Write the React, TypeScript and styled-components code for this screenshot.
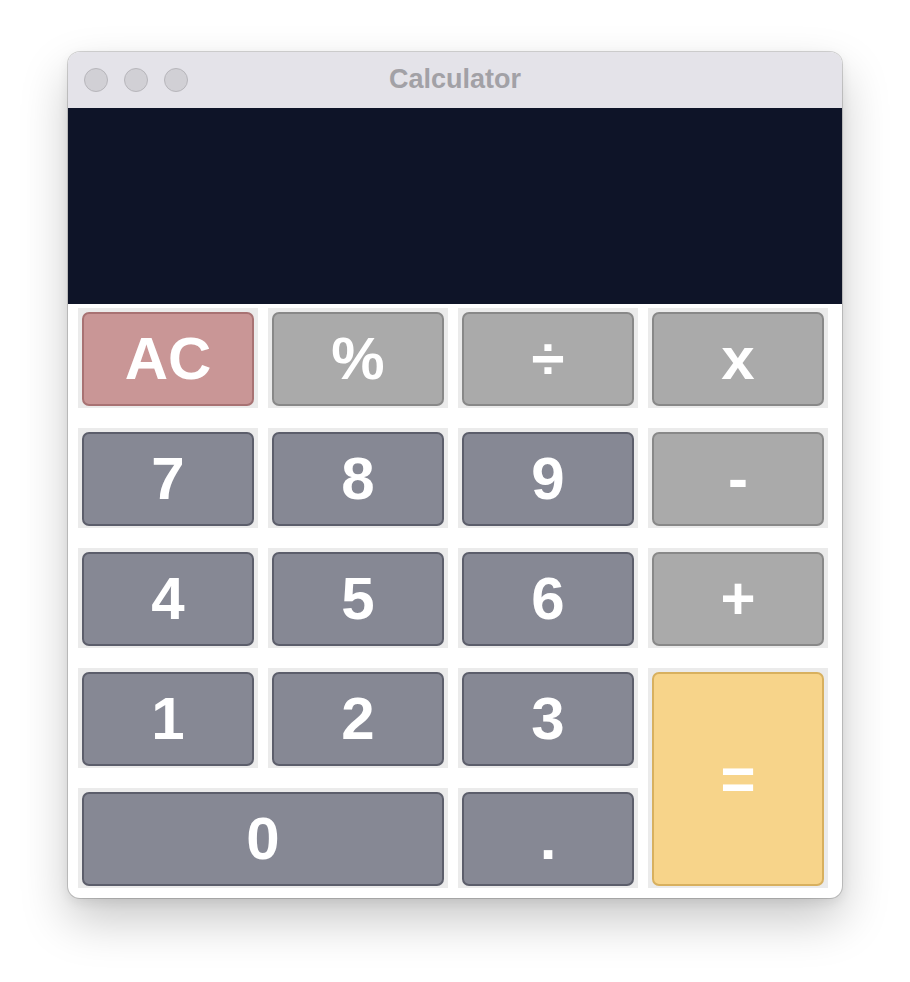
import React from "react";
import styled, { createGlobalStyle } from "styled-components";

const Global = createGlobalStyle`
  html, body { margin: 0; padding: 0; background: #ffffff; }
  body { font-family: "Liberation Sans", Arial, sans-serif; }
`;

const Page = styled.div`
  display: flex;
  justify-content: center;
  padding-top: 52px;
  height: 982px;
  box-sizing: border-box;
`;

const Window = styled.div`
  width: 774px;
  height: 846px;
  box-sizing: border-box;
  background: #ffffff;
  border-radius: 12px;
  overflow: hidden;
  box-shadow: 0 0 0 1px rgba(0, 0, 0, 0.16), 0 22px 48px rgba(0, 0, 0, 0.22),
    0 4px 12px rgba(0, 0, 0, 0.08);
  display: flex;
  flex-direction: column;
`;

const TitleBar = styled.div`
  height: 56px;
  flex: none;
  background: #e4e3e9;
  display: flex;
  align-items: center;
  position: relative;
  padding-left: 16px;
  gap: 16px;
`;

const Light = styled.span`
  width: 22px;
  height: 22px;
  border-radius: 50%;
  background: #d1d0d5;
  border: 1px solid #b7b6bb;
`;

const Title = styled.div`
  position: absolute;
  left: 0;
  right: 0;
  top: 0;
  bottom: 0;
  display: flex;
  align-items: center;
  justify-content: center;
  padding-bottom: 2px;
  font-weight: bold;
  font-size: 27px;
  color: #a2a1a6;
  pointer-events: none;
`;

const Display = styled.div`
  height: 196px;
  flex: none;
  background: #0e1428;
`;

const Keypad = styled.div`
  display: grid;
  grid-template-columns: repeat(4, 180px);
  grid-auto-rows: 100px;
  column-gap: 10px;
  row-gap: 20px;
  padding: 4px 14px 10px 10px;
`;

const Cell = styled.div<{ $wide?: boolean; $tall?: boolean }>`
  background: #ebebeb;
  padding: 4px 4px 2px 4px;
  display: flex;
  ${(p) => (p.$wide ? "grid-column: span 2;" : "")}
  ${(p) => (p.$tall ? "grid-row: span 2;" : "")}
`;

type Kind = "clear" | "op" | "num" | "eq";

const palette: Record<Kind, [string, string]> = {
  clear: ["#c99696", "#a87273"],
  op: ["#aaaaaa", "#888888"],
  num: ["#868894", "#5c5e6b"],
  eq: ["#f7d48a", "#d8b05e"],
};

const Key = styled.button<{ $kind: Kind }>`
  flex: 1;
  margin: 0;
  padding: 0;
  border-radius: 7px;
  border: 2px solid ${(p) => palette[p.$kind][1]};
  background: ${(p) => palette[p.$kind][0]};
  color: #ffffff;
  font-family: "Liberation Sans", Arial, sans-serif;
  font-weight: bold;
  font-size: 60px;
  line-height: 1;
  display: flex;
  align-items: center;
  justify-content: center;
  cursor: pointer;
`;

const keys: { label: string; kind: Kind; wide?: boolean; tall?: boolean }[] = [
  { label: "AC", kind: "clear" },
  { label: "%", kind: "op" },
  { label: "÷", kind: "op" },
  { label: "x", kind: "op" },
  { label: "7", kind: "num" },
  { label: "8", kind: "num" },
  { label: "9", kind: "num" },
  { label: "-", kind: "op" },
  { label: "4", kind: "num" },
  { label: "5", kind: "num" },
  { label: "6", kind: "num" },
  { label: "+", kind: "op" },
  { label: "1", kind: "num" },
  { label: "2", kind: "num" },
  { label: "3", kind: "num" },
  { label: "=", kind: "eq", tall: true },
  { label: "0", kind: "num", wide: true },
  { label: ".", kind: "num" },
];

export default function App() {
  return (
    <>
      <Global />
      <Page>
        <Window>
          <TitleBar>
            <Light />
            <Light />
            <Light />
            <Title>Calculator</Title>
          </TitleBar>
          <Display />
          <Keypad>
            {keys.map((k) => (
              <Cell key={k.label} $wide={k.wide} $tall={k.tall}>
                <Key $kind={k.kind}>{k.label}</Key>
              </Cell>
            ))}
          </Keypad>
        </Window>
      </Page>
    </>
  );
}
